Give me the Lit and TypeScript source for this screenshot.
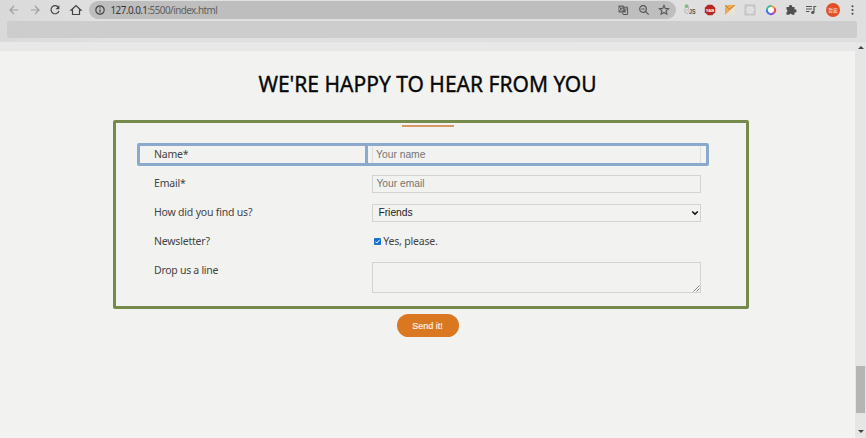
import { LitElement, html, css, svg } from "lit";
import { customElement } from "lit/decorators.js";

@customElement("browser-bar")
class BrowserBar extends LitElement {
  static styles = css`
    :host { display: block; height: 42px; background: linear-gradient(90deg, #d9d9d9, #e1e1e1 12%, #dfdfdf); border-bottom: 1px solid #dcdcdc; box-sizing: border-box; }
    svg { display: block; flex: none; overflow: visible; }
    .top { display: flex; align-items: center; height: 19px; padding-left: 8px; }
    .nav { display: flex; gap: 8.5px; width: 81px; }
    .address { display: flex; align-items: center; box-sizing: border-box; width: 587px; height: 18px; margin-top: 1px; padding: 0 6px 0 5px; border-radius: 9px; background: #bebebe; color: #444; }
    .url { flex: 1; margin-left: 4.5px; font: 9.9px/17px "Noto Sans", sans-serif; color: #606060; letter-spacing: -0.54px; white-space: nowrap; }
    .host { color: #383838; }
    .tools { display: flex; gap: 8.5px; }
    .extensions { display: flex; align-items: center; gap: 8.3px; margin-left: 7.5px; }
    .bookmarks { height: 17px; margin: 2px 9px 0 7px; border-radius: 2px; background: #cdcdcd; }
    text { font-family: "Liberation Sans", "Noto Sans CJK TC", sans-serif; font-weight: 700; }
  `;
  icon(body: unknown, color = "#555") {
    return html`<svg width="12" height="12" viewBox="0 0 12 12" fill="none" stroke=${color} stroke-width="1.2">${body}</svg>`;
  }
  render() {
    return html`
      <div class="top">
        <div class="nav">
          ${this.icon(svg`<path d="M10.2 6H2M6 2 2 6l4 4"/>`, "#a0a0a0")}
          ${this.icon(svg`<path d="M1.8 6H10M6 2l4 4-4 4"/>`, "#a0a0a0")}
          ${this.icon(svg`<path d="M9.5 3.3A4.1 4.1 0 1 0 10 7"/><path d="M10.4 1.2v4H6.5z" fill="#444" stroke="none"/>`, "#444")}
          ${this.icon(svg`<path d="M1 6.2 6 1.5l5 4.7H9.5v4.3h-7V6.2z"/>`, "#444")}
        </div>
        <div class="address">
          ${this.icon(svg`<circle cx="6" cy="6" r="4.2"/><path d="M6 5.4v3M6 3.3v1.2"/>`, "#444")}
          <span class="url"><span class="host">127.0.0.1</span>:5500/index.html</span>
          <div class="tools">
            ${this.icon(svg`<path d="M1.5 1.5h5l2.5 7h-7.5z" fill="#606060" stroke="none"/><path d="M7 3.2h3.6v7.3H6.2L5.6 8.6" stroke-width="1"/><path d="M5.8 4.1A1.8 1.8 0 1 0 6 5.2H4.4" stroke="#ccc" stroke-width=".8"/><path d="M7.4 5.2h2.6M8.7 4.4v.8M9.5 5.4 7.8 8" stroke-width=".6"/>`)}
            ${this.icon(svg`<circle cx="5" cy="5" r="3.3"/><path d="m7.4 7.4 3.3 3.3M3.4 5h3.2"/>`)}
            ${this.icon(svg`<path d="m6 1.4 1.3 3 3.3.3-2.5 2.2.8 3.3L6 8.5l-2.9 1.7.8-3.3-2.5-2.2 3.3-.3z" stroke-width="1.1"/>`)}
          </div>
        </div>
        <div class="extensions">
          ${this.icon(svg`<circle cx="2.6" cy="2.2" r="1.9" fill="#83bc82" stroke="none"/><path d="M1 4.5v4l3 1.5M3 5.5 5 8M4.5 3v2.5" stroke="#aaa" stroke-width=".8"/><text x="5" y="10.2" font-size="7" textLength="6.6" lengthAdjust="spacingAndGlyphs" fill="#505050" stroke="none">JS</text>`)}
          ${this.icon(svg`<path d="M3.8.8h4.4l3 3v4.4l-3 3H3.8l-3-3V3.8z" fill="#b82525" stroke="none"/><text x="1.8" y="7.7" font-size="4.3" textLength="8.4" lengthAdjust="spacingAndGlyphs" fill="#fff" stroke="none">YAB</text>`)}
          ${this.icon(svg`<path d="M1 1h10v10H1z" fill="#e9e2d7" stroke="none"/><path d="M1 1h10L5 7.5 1 11z" fill="#e9ac55" stroke="none"/><path d="m1.5 1.5 4 4L11 1" stroke="#cd782b" stroke-width="1"/>`)}
          ${this.icon(svg`<rect x="1" y="1" width="10" height="10" fill="#cfcfcf" stroke-width=".8"/><circle cx="6" cy="6" r="3" stroke="#eee" fill="#dedede" stroke-dasharray="1.2 .7" stroke-width="1.2"/>`, "#bbb")}
          ${this.icon(svg`<circle cx="6" cy="6" r="5" fill="#fff" stroke="none"/><g stroke-width="2"><path d="M6 1.9a4.1 4.1 0 0 1 3.5 2" stroke="#ee9938"/><path d="M9.5 3.9A4.1 4.1 0 0 1 9 8.8" stroke="#e55149"/><path d="M9 8.8A4.1 4.1 0 0 1 5 10" stroke="#8d4ad1"/><path d="M5 10A4.1 4.1 0 0 1 1.9 6" stroke="#3979ec"/><path d="M1.9 6A4.1 4.1 0 0 1 6 1.9" stroke="#40b6a0"/></g>`)}
          ${this.icon(svg`<path d="M1.5 3h2.7a1.5 1.5 0 1 1 2.8 0h2.5v2.5a1.5 1.5 0 1 1 0 2.8v2.4H7a1.5 1.5 0 0 0-2.8 0H1.5V8.2a1.5 1.5 0 0 0 0-2.8z" fill="#505050" stroke="none"/>`)}
          ${this.icon(svg`<path d="M1 2.5h6M1 5h6M1 7.5h3.5M9 8.5v-6h2.3"/><circle cx="7.7" cy="8.5" r="1.5" fill="#505050" stroke="none"/>`)}
          <svg width="14" height="14" viewBox="0 0 14 14"><circle cx="7" cy="7" r="7" fill="#e25025"/><text x="2.2" y="8.9" font-size="4.8" fill="#f5cbbb">哲宏</text></svg>
          ${this.icon(svg`<g fill="#444" stroke="none"><circle cx="4.5" cy="2.2" r="1"/><circle cx="4.5" cy="6" r="1"/><circle cx="4.5" cy="9.8" r="1"/></g>`)}
        </div>
      </div>
      <div class="bookmarks"></div>`;
  }
}

@customElement("contact-form")
class ContactForm extends LitElement {
  static styles = css`
    :host { display: block; }
    h2 { margin: 0; height: 69px; padding-top: 17px; box-sizing: border-box; text-align: center; font: 400 21px/32px "Noto Sans", sans-serif; color: #080808; -webkit-text-stroke: 0.35px #080808; white-space: nowrap; }
    .frame { box-sizing: border-box; width: 636px; height: 189px; margin-left: 113px; border: 3px solid #768b4b; border-radius: 2px; padding: 0 37px 0 21px; }
    .rule { width: 52px; height: 2px; margin: 2px 0 16px 265px; background: #d69761; }
    .row { display: grid; grid-template-columns: 235.4px 329px; height: 18px; margin-bottom: 11px; color: #444; font: 10.5px/18px "Noto Sans", sans-serif; letter-spacing: -0.2px; }
    .highlight { box-sizing: border-box; width: 572px; height: 23px; border: 3px solid #8ba9cd; border-radius: 2px; margin-bottom: 9px; grid-template-columns: 225px 3px 4px 330px; grid-template-rows: 17px; }
    .divider { background: #8ba9cd; }
    .label { padding-left: 17px; line-height: 16px; white-space: nowrap; }
    .highlight .label { padding-left: 14px; line-height: 17px; }
    .last .label { letter-spacing: -0.28px; }
    input, select, textarea { display: block; box-sizing: border-box; width: 329px; height: 18px; margin: 0; padding: 0 3px 1px; border: 1px solid #d3d3d2; border-radius: 0; background: transparent; font: 10.3px "Liberation Sans", sans-serif; color: #222; outline: 0; }
    .highlight input { height: 17px; border-top: 0; border-bottom: 0; border-color: #dededc; padding: 0 3px; }
    input::placeholder { color: #757575; opacity: 1; }
    .select { position: relative; }
    select { appearance: none; padding-left: 5px; }
    .arrow { position: absolute; right: 2px; top: 6px; }
    textarea { height: 31px; resize: none; }
    .area { position: relative; height: 31px; }
    .grip { position: absolute; right: 1px; bottom: 1px; }
    .check { display: flex; align-items: center; height: 16px; letter-spacing: -0.19px; }
    .tick { margin: 1px 2px 0 1.9px; }
    button { display: block; width: 62px; height: 23px; margin: 5px 0 0 396.5px; padding: 0; border: 0; border-radius: 12px; background: #d97820; color: #fff4e8; font: 9px "Liberation Sans", sans-serif; -webkit-text-stroke: 0.15px #fff4e8; }
    svg { display: block; }
  `;
  render() {
    return html`
      <h2>WE'RE HAPPY TO HEAR FROM YOU</h2>
      <div class="frame">
        <div class="rule"></div>
        <div class="row highlight"><span class="label">Name*</span><span class="divider"></span><span></span><input placeholder="Your name"></div>
        <div class="row"><span class="label">Email*</span><input placeholder="Your email"></div>
        <div class="row"><span class="label">How did you find us?</span><div class="select"><select><option>Friends</option></select><svg class="arrow" width="8" height="6" viewBox="0 0 8 6"><path d="m1.2 1.5 2.8 2.6 2.8-2.6" fill="none" stroke="#111" stroke-width="1.6"/></svg></div></div>
        <div class="row"><span class="label">Newsletter?</span><div class="check"><svg class="tick" width="7" height="7" viewBox="0 0 7 7"><rect width="7" height="7" rx="1" fill="#1670d2"/><path d="m1.4 3.6 1.4 1.5 2.8-3.3" fill="none" stroke="#fff"/></svg>Yes, please.</div></div>
        <div class="row last"><span class="label">Drop us a line</span><div class="area"><textarea></textarea><svg class="grip" width="7" height="7" viewBox="0 0 7 7"><path d="m.5 6.5 6-6m-3 6 3-3" stroke="#888" fill="none"/></svg></div></div>
      </div>
      <button>Send it!</button>`;
  }
}

@customElement("app-root")
class AppRoot extends LitElement {
  static styles = css`
    :host { display: block; width: 866px; height: 438px; overflow: hidden; background: #f2f2f0; }
    .view { display: flex; height: 396px; }
    .page { flex: 1; min-width: 0; }
    .strip { height: 9px; background: #e8e8e8; }
    .scrollbar { display: flex; flex-direction: column; align-items: center; width: 11px; background: #e6e6e6; }
    .up { border: 3px solid transparent; border-top: 0; border-bottom: 3px solid #444; margin-top: 4px; }
    .thumb { width: 9px; height: 47px; margin-top: 317px; background: #b5b5b5; }
    .down { border: 3px solid transparent; border-bottom: 0; border-top: 3px solid #444; margin-top: 17px; }
  `;
  render() {
    return html`
      <browser-bar></browser-bar>
      <div class="view">
        <div class="page"><div class="strip"></div><contact-form></contact-form></div>
        <div class="scrollbar"><div class="up"></div><div class="thumb"></div><div class="down"></div></div>
      </div>`;
  }
}
